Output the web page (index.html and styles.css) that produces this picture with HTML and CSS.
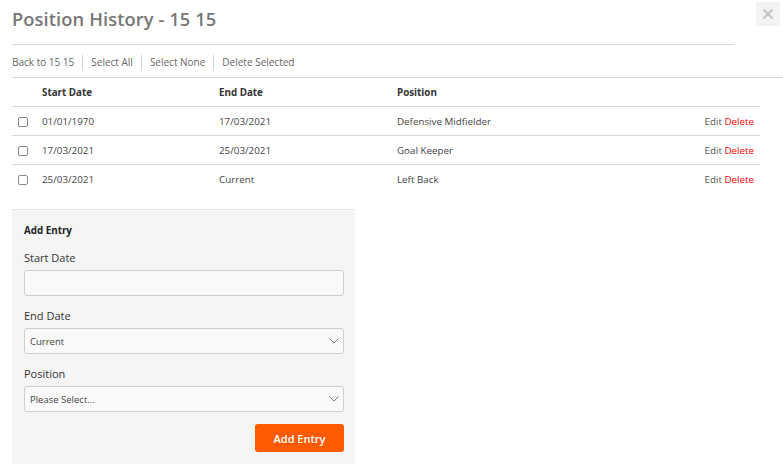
FILE: index.html
```html
<!DOCTYPE html>
<html>
<head>
<meta charset="utf-8">
<link rel="stylesheet" href="styles.css">
</head>
<body>
<div class="modal">
  <div class="header">
    <h1 class="title">Position History - 15 15</h1>
    <button class="close" aria-label="Close">
      <svg width="12" height="12" viewBox="0 0 12 12"><path d="M1.5 1.5 L10.5 10.5 M10.5 1.5 L1.5 10.5" stroke="#c4c4c4" stroke-width="2" fill="none"/></svg>
    </button>
  </div>
  <div class="rule"></div>
  <div class="toolbar">
    <a class="tool">Back to 15 15</a>
    <a class="tool">Select All</a>
    <a class="tool">Select None</a>
    <a class="tool">Delete Selected</a>
  </div>
  <table class="grid">
    <thead>
      <tr><th class="c-check"></th><th class="c-start">Start Date</th><th class="c-end">End Date</th><th class="c-pos">Position</th><th class="c-act"></th></tr>
    </thead>
    <tbody>
      <tr><td class="c-check"><span class="cb"></span></td><td>01/01/1970</td><td>17/03/2021</td><td>Defensive Midfielder</td><td class="c-act"><a class="edit">Edit</a> <a class="del">Delete</a></td></tr>
      <tr><td class="c-check"><span class="cb"></span></td><td>17/03/2021</td><td>25/03/2021</td><td>Goal Keeper</td><td class="c-act"><a class="edit">Edit</a> <a class="del">Delete</a></td></tr>
      <tr><td class="c-check"><span class="cb"></span></td><td>25/03/2021</td><td>Current</td><td>Left Back</td><td class="c-act"><a class="edit">Edit</a> <a class="del">Delete</a></td></tr>
    </tbody>
  </table>
  <div class="panel">
    <div class="panel-title">Add Entry</div>
    <label class="lbl">Start Date</label>
    <div class="input"></div>
    <label class="lbl">End Date</label>
    <div class="select"><span>Current</span><svg width="10" height="6" viewBox="0 0 10 6"><path d="M0.5 0.5 L5 5 L9.5 0.5" stroke="#777" stroke-width="1" fill="none"/></svg></div>
    <label class="lbl">Position</label>
    <div class="select"><span>Please Select...</span><svg width="10" height="6" viewBox="0 0 10 6"><path d="M0.5 0.5 L5 5 L9.5 0.5" stroke="#777" stroke-width="1" fill="none"/></svg></div>
    <div class="actions"><button class="btn">Add Entry</button></div>
  </div>
</div>
</body>
</html>
```
FILE: styles.css
```css
* { box-sizing: border-box; }
html, body { margin: 0; padding: 0; background: #fff; }
body { font-family: "Open Sans", "DejaVu Sans", sans-serif; color: #333; }
.modal { padding: 0 0 0 12px; width: 783px; }
.header { display: flex; justify-content: space-between; align-items: flex-start; height: 44px; }
.title { margin: 6px 0 0 0; font-size: 18.3px; font-weight: 600; color: #777; letter-spacing: 0.1px; }
.close { margin: 2px 3px 0 0; width: 24px; height: 24px; border: none; background: #f3f3f3; display: flex; align-items: center; justify-content: center; padding: 0; }
.rule { width: 722px; height: 1px; background: #d6d6d6; }
.toolbar { display: flex; align-items: center; height: 33px; padding-top: 1px; border-bottom: 1px solid #d6d6d6; }
.tool { font-size: 10px; color: #666; padding: 0 8px; border-left: 1px solid #d0d0d0; line-height: 14px; }
.tool:first-child { padding-left: 0; border-left: none; }
.grid { border-collapse: collapse; width: 748px; font-size: 9.8px; }
.grid th { text-align: left; font-weight: 700; color: #333; height: 28px; border-bottom: 1px solid #d6d6d6; padding: 1px 0 0 0; }
.grid td { height: 29px; border-bottom: 1px solid #d6d6d6; padding: 1px 0 0 0; color: #444; }
.grid tbody tr:last-child td { border-bottom: none; }
.c-check { width: 30px; }
.c-start { width: 177px; }
.c-end { width: 178px; }
.c-pos { width: 240px; }
.c-act { text-align: right; padding-right: 6px !important; }
.cb { display: inline-block; width: 10px; height: 10px; border: 1px solid #888; border-radius: 2px; margin-left: 6px; vertical-align: middle; background: #fff; }
.edit { color: #555; }
.del { color: #f00; }
.panel { margin-top: 16px; width: 343px; background: #f5f5f5; border-top: 1px solid #e6e6e6; padding: 14px 11px 12px 12px; }
.panel-title { font-size: 9.8px; font-weight: 700; color: #222; margin-bottom: 13px; }
.lbl { display: block; font-size: 11px; color: #333; margin-bottom: 5px; }
.input, .select { width: 320px; height: 26px; background: #fafafa; border: 1px solid #cfcfcf; border-radius: 3px; margin-bottom: 12px; }
.select { display: flex; justify-content: space-between; align-items: center; padding: 0 4px 0 5px; font-size: 9.5px; color: #444; }
.actions { display: flex; justify-content: flex-end; padding-right: 0; }
.btn { width: 89px; height: 28px; background: #ff5a00; color: #fff; border: none; border-radius: 3px; font-family: "Open Sans", sans-serif; font-size: 11px; font-weight: 600; }
```
